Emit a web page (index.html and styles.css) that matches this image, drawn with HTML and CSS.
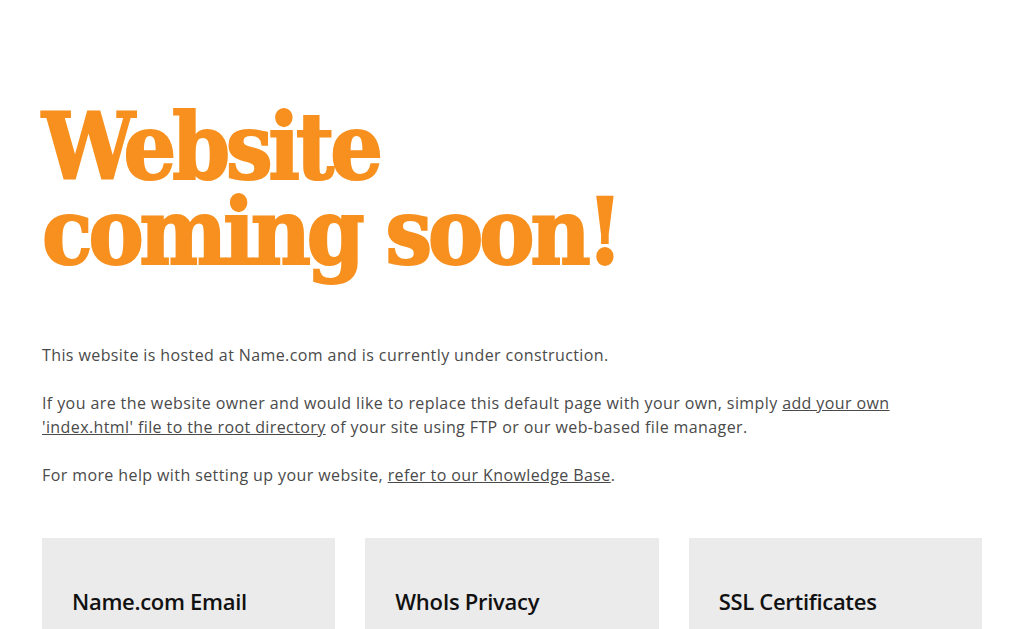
FILE: index.html
```html
<!DOCTYPE html>
<html lang="en">
<head>
<meta charset="UTF-8">
<meta name="viewport" content="width=device-width, initial-scale=1.0">
<title>Website coming soon!</title>
<link rel="stylesheet" href="styles.css">
</head>
<body>

<!-- main -->
<div class="page">
  <h1 class="headline">Website<br>coming soon!</h1>

  <div class="intro">
    <p>This website is hosted at Name.com and is currently under construction.</p>
    <p>If you are the website owner and would like to replace this default page with your own, simply <a href="#">add your own 'index.html' file to the root directory</a> of your site using FTP or our web-based file manager.</p>
    <p>For more help with setting up your website, <a href="#">refer to our Knowledge Base</a>.</p>
  </div>

  <!-- products -->
  <div class="cards">
    <div class="card"><h2>Name.com Email</h2></div>
    <div class="card"><h2>WhoIs Privacy</h2></div>
    <div class="card"><h2>SSL Certificates</h2></div>
  </div>
</div>

</body>
</html>
```

FILE: styles.css
```css
body {
  margin: 0;
  background-color: #fff;
  font-family: 'Open Sans', 'Liberation Sans', sans-serif;
  color: #4a4a4a;
}
.page {
  width: 940px;
  margin: 0 auto;
  padding-top: 105px;
}
.headline {
  margin: 0;
  font-family: 'DejaVu Serif Condensed', 'DejaVu Serif', serif;
  font-stretch: condensed;
  font-weight: bold;
  font-size: 92px;
  line-height: 85px;
  letter-spacing: -4px;
  color: #f7901e;
  -webkit-text-stroke: 2px #f7901e;
}
.intro {
  margin-top: 68px;
  font-size: 16px;
  line-height: 24px;
  letter-spacing: 0.4px;
}
.intro p {
  margin: 0 0 24px;
}
.intro a {
  color: #4a4a4a;
}
.cards {
  display: flex;
  gap: 30px;
  margin-top: 51px;
}
.card {
  flex: 1;
  background-color: #ebebeb;
  height: 120px;
  padding: 50px 30px 0;
}
.card h2 {
  margin: 0;
  font-size: 22px;
  line-height: 26px;
  font-weight: 600;
  color: #111;
  letter-spacing: -0.3px;
}
```
